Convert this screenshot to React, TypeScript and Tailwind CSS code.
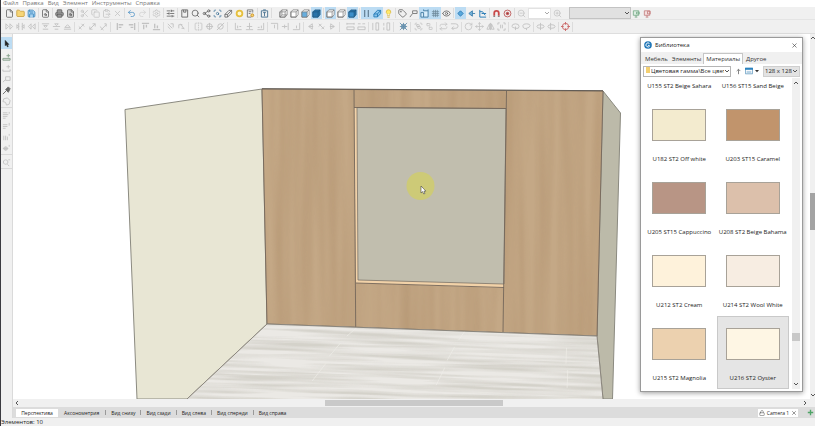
import React from "react";
import {
  ClipboardPaste, Copy, Eye, File, Folder, Lightbulb, Lock, Printer,
  Redo2, Save, Scissors, Search, Settings, Share2, SlidersHorizontal, Tag, Undo2, X, ZoomIn, ZoomOut,
  FileSearch, FlipHorizontal, Move, RotateCw, Repeat, Group, Ungroup, ScanSearch,
} from "lucide-react";
import type { LucideIcon } from "lucide-react";

type Tool = { label: string; icon: React.ReactNode; active?: boolean };
type Swatch = { name: string; color: string; selected?: boolean };

const DARK = "#5a5a5a";
const PALE = "#c2c2c2";
const BLUE = "#2f7fb8";

const lu = (I: LucideIcon, color = DARK, fill = "none") => (
  <I size={9} strokeWidth={2} color={color} fill={fill} aria-hidden />
);

// Small drawing on a 10 x 10 grid.
const Glyph = ({ d, color = PALE, fill = "none", w = 1 }: { d: string; color?: string; fill?: string; w?: number }) => (
  <svg viewBox="0 0 10 10" className="size-[9px]" fill={fill} stroke={color} strokeWidth={w} aria-hidden>
    <path d={d} />
  </svg>
);

const Cube = ({ front = "none", wire = false, solid = false }: { front?: string; wire?: boolean; solid?: boolean }) => (
  <svg viewBox="0 0 10 10" className="size-[9px]" stroke={solid ? "#1e567f" : "#777"} strokeWidth=".8" strokeLinejoin="round" aria-hidden>
    <path d="M1 3.2 3.2 1H9v5.3L6.8 9H1Z" fill={solid ? "#2a74aa" : "#fff"} />
    <path d="M1 3.2h5.8V9H1Z" fill={front} />
    <path d="M6.8 3.2 9 1" />
    {wire && <path d="M3.2 1v5.6H9M3.2 6.6 1 9" fill="none" />}
  </svg>
);

const t = (label: string, icon: React.ReactNode, active = false): Tool => ({ label, icon, active });
const g = (label: string, d: string, color = PALE, fill = "none", w = 1) => t(label, <Glyph d={d} color={color} fill={fill} w={w} />);

const mainTools: Tool[][] = [
  [t("Создать", lu(File)), t("Открыть", lu(Folder, "#c79a35", "#f6d577")), t("Сохранить", lu(Save, BLUE, "#a9d3f0"))],
  [t("Просмотр", lu(FileSearch))],
  [t("Печать", lu(Printer, DARK, "#999")), t("Настройка печати", lu(FileSearch, DARK, "#ccc"))],
  [t("Вырезать", lu(Scissors, PALE)), t("Копировать", lu(Copy, PALE)), t("Вставить", lu(ClipboardPaste, PALE)), t("Удалить", lu(X, PALE))],
  [t("Отменить", lu(Undo2, "#4a8fc4")), t("Повторить", lu(Redo2, "#d0d0d0"))],
  [t("Параметры", lu(Settings, PALE))],
  [t("Свойства", lu(SlidersHorizontal))],
  [
    g("Закладка", "M2 1h6.5v8H2ZM4 1v2.500h2.500V1", "#666"),
    t("Найти", lu(Search)), t("Структура", lu(Share2)),
    t("Проверка", lu(ScanSearch, "#41749a")), g("Связь", "M1 6 5.500 1.500H8.500V4.500L4 9H1ZM1 6h3v3M4 6l4.500-4.500", "#666", "none", .9),
    g("Кольцо", "M5 1.8a3.2 3.2 0 1 0 0 6.4 3.2 3.2 0 1 0 0-6.4", "#e6bf3d", "#fff8d0", 2),
    t("Отчёт", <svg viewBox="0 0 10 10" className="size-[9px]" fill="none" stroke="#777" aria-hidden><path d="M6 9H1.500V1H7.500v3M3 3h3M3 5h2" /><circle cx="7" cy="7" r="1.600" fill="#f7d66c" stroke="#c98f2b" /></svg>),
  ],
  [g("Текст", "M1.500 2h7v7h-7ZM3.500 1h3M3.500 4h3M5 4v4", "#456f8e")],
];
const viewTools: Tool[][] = [
  [t("Каркас", <Cube wire />), t("Контур", <Cube />), t("Полутон", <Cube front="#67aede" />), t("Заливка", <Cube solid front="#2a74aa" />, true)],
  [t("Рёбра", <Cube />, true), t("Без рёбер", <Cube />), t("Текстуры", <Cube solid front="#3c8fca" />, true)],
  [
    { ...g("Стойки", "M3 1v8M7 1v8", "#5f7c90", "none", 1.3), active: true },
    { ...g("Прозрачность", "M1 5.5 5 1.5h3.5V5L5 8.8H1ZM1 5.5h4v3.3M5 5.5 8.5 1.5", "#257bb7", "#8bc4ea"), active: true },
    t("Свет", lu(Lightbulb, "#d8b534", "#ffe96a")),
  ],
  [
    t("Метка", lu(Tag)), g("Выноска", "M1 9 4 5M4 2h5v3H4Z", "#777"),
    { ...g("Размеры", "M1 4h3v5H1ZM4 2h5v7H4M4 2V.5M9 2V.5", "#3e789f", "#d8edfb"), active: true },
    { ...g("Сетка", "M1 3h8M1 5h8M1 7h8M3 1v8M5 1v8M7 1v8", "#6a8596", "none", .8), active: true },
    t("Показать", lu(Eye)),
  ],
  [
    { ...g("Привязка", "M5 2 8 5 5 8 2 5Z", "#2c7bb4", "#58a8dc"), active: true },
    g("Точка", "M6 2v6L2 5ZM6 5h3", "#3e7fab", "#74b5dd"), g("Оси", "M2 1v8h7M2 3h3l3 4M4 5h5", BLUE, "none", 1.1),
  ],
  [
    t("Магнит", <svg viewBox="0 0 10 10" className="size-[9px]" fill="none" strokeWidth="2" aria-hidden><path d="M2.500 7.500V4.500a2.500 2.500 0 0 1 5 0v3" stroke="#c94848" /><path d="M2.500 7.500v1.500M7.500 7.500v1.500" stroke="#888" /></svg>),
    t("Цель", <svg viewBox="0 0 10 10" className="size-[9px]" fill="none" stroke="#bd5a5a" aria-hidden><circle cx="5" cy="5" r="3.800" /><circle cx="5" cy="5" r="1.400" fill="#a33" /></svg>),
  ],
];

const L = (dir: number) => (dir === 0 ? "M1 2v6L4 5ZM5.500 2v6L8.500 5Z" : dir === 1 ? "M3 1v8M7 1v8M1 3v4L3 5ZM9 3v4L7 5Z" : "M9 2v6L6 5ZM4.500 2v6L1.500 5Z");
const alignTools: { gap: string; groups: Tool[][] }[] = [
  { gap: "", groups: [
    [0, 1, 2].map((i) => g(`Сдвиг по X ${i + 1}`, L(i))),
    [g("Сдвиг вверх", "M1 2h8M3 4h4L5 6ZM2 8h6"), g("Сдвиг по центру", "M1 5h8M3 2h4L5 4ZM3 8h4"), g("Сдвиг вниз", "M1 8h8M2 6h6L5 3Z")],
    [g("Глубина 1", "M2 8 8 2M2 5l3 3M5 2l3 3"), g("Глубина 2", "M2 8l6-6M5 2h3v3M2 5v3h3"), g("Глубина 3", "M2 9l6-6M1 5l4 4M6 2h2v3")],
  ] },
  { gap: "ml-[3px]", groups: [
    [g("По левому краю", "M1.5 1v8M3 3h5M3 6h3", PALE, "none", 1.5), g("По правому краю", "M8.5 1v8M2 3h5M4 6h3", PALE, "none", 1.5)],
    [g("По верху", "M1 1.5h8M3 3v5M6 3v3", PALE, "none", 1.5), g("По низу", "M1 8.5h8M3 2v5M6 4v3", PALE, "none", 1.5)],
    [g("Вперёд", "M2 2l5 5M2 5l3 3M5 2h3v4"), g("Назад", "M2 7V3h4M4 2l4 6M5 7h3")],
  ] },
  { gap: "ml-[3px]", groups: [
    [t("Отразить", lu(FlipHorizontal, PALE)), g("Центр", "M5 1v8M1 5h8M5 2a3 3 0 1 0 0 6 3 3 0 1 0 0-6"), g("Отменить выбор", "M5 2a3 3 0 1 0 0 6 3 3 0 1 0 0-6M1 9 9 1")],
  ] },
  { gap: "ml-[4px]", groups: [
    [g("Край 1", "M1.5 1v7.500h7M4 4v3M6 5h2"), g("Край 2", "M5 1v7M1 8.5h8M2 5h6"), g("Край 3", "M8.5 1v7.500h-7M6 4v3M2 6h2")],
    [g("Верх 1", "M1 1.5h7.5v7M5 3v4"), g("Верх 2", "M8 1v8M1 5h6M4 3v4"), g("Верх 3", "M1 8.5h7.5V1M5 4v3")],
    [g("Угол 1", "M3 5l4-3v6ZM3 5h5"), g("Угол 2", "M2 2l6 6M2 5l3-3M5 8l3-3"), g("Угол 3", "M7 5 3 2v6ZM2 5h5")],
  ] },
  { gap: "ml-[4px]", groups: [
    [g("Ширина 1", "M1 2h8M1 1v2M9 1v2M1 5.500h8v3H1Z"), g("Ширина 2", "M1 2h3M6 2h3M1 5.500h8v3H1Z")],
    [g("Высота 1", "M2 1v8M5.500 1h3v8h-3Z"), g("Высота 2", "M2 1v3M2 6v3M5.500 1h3v8h-3Z")],
  ] },
  { gap: "ml-[3px]", groups: [
    [g("Узлы", "M3 3h4v4H3ZM1 5h8M5 1v8M1 1l8 8M9 1 1 9", "#5f8ba8", "#b6d8ee", .9)],
  ] },
  { gap: "ml-px", groups: [
    [t("Группа", lu(Group, PALE)), t("Разгруппировать", lu(Ungroup, PALE))],
    [t("Шаг назад", lu(Repeat, PALE)), g("Шаг вперёд", "M1 2h5q3 0 3 2.5T6 7H2M4 5 2 7l2 2")],
    [t("Повернуть", lu(RotateCw, PALE)), t("Переместить", lu(Move, PALE)), g("Зеркало", "M4 2v6H1ZM6 2v6h3ZM5 1v8"), g("Масштаб", "M1 3V1h2M7 1h2v2M9 7v2H7M3 9H1V7M4 3v4M6 3v4")],
    [g("Соединить", "M1 5q0-3 4-3t4 3-4 2-4-2M5 5v4"), g("Разъединить", "M1 4q0-2 4-2t4 2-4 3-4-3M5 7v2")],
    [g("Сечение", "M1 5q0-2 4-2t4 2-4 2-4-2M5 1v8"), g("Разрез", "M1 5q0-2 4-2t4 2-4 2-4-2M4 1v8")],
    [g("Прицел", "M5 1.5a3.5 3.5 0 1 0 0 7 3.5 3.5 0 1 0 0-7M5 0v3M5 7v3M0 5h3M7 5h3", "#c96464")],
  ] },
];

const sideTools: Tool[][] = [
  [g("Добавить деталь", "M1 6h8v2H1ZM7 1v4M5 3h4", "#86a08b", "#ddd"), g("Добавить профиль", "M1 6v2h8V6M7 1v4M5 3h4"), g("Линия", "M1 8 4 5M4 2h5v4H4Z"), g("Пипетка", "M1 9 5 5M4 4l3 3 2-4-2-2Z", "#666", "#666", 1), g("Область", "M2 2l4-1 3 3-1 4-3 1-1-3-3-1Z")],
  [g("Список", "M1 2h5M1 4h6M1 6h5M1 8h3M8 1v2"), g("Слои", "M1 3h5M1 5h5M1 7h3M8 1v3"), g("Колонки", "M2 3v5M4 3v5M6 4v4M8 1v2"), g("Узел", "M4 3a2 2 0 1 0 .1 0M1 5h6M8 1v2", PALE, "#ccc")],
  [g("Поиск", "M4 2a2.5 2.5 0 1 0 .1 0M6 7l2 2M7 2h2")],
];

const swatchRows: Swatch[] = [
  { name: "U182 ST2 Off white", color: "bg-[#f3ebcf]" },
  { name: "U203 ST15 Caramel", color: "bg-[#c1946c]" },
  { name: "U205 ST15 Cappuccino", color: "bg-[#b89585]" },
  { name: "U208 ST2 Beige Bahama", color: "bg-[#dcc0ab]" },
  { name: "U212 ST2 Cream", color: "bg-[#fef2db]" },
  { name: "U214 ST2 Wool White", color: "bg-[#f7ede2]" },
  { name: "U215 ST2 Magnolia", color: "bg-[#ecd1af]" },
  { name: "U216 ST2 Oyster", color: "bg-[#fef6e4]", selected: true },
];

const ToolButton = ({ tool, vertical = false }: { tool: Tool; vertical?: boolean }) => (
  <button type="button" aria-label={tool.label} aria-pressed={tool.active}
    className={`flex w-[11px] shrink-0 items-center justify-center ${vertical ? "h-[11px]" : "h-[12px]"} ${tool.active ? "bg-[#bcdcf3]" : ""}`}>
    {tool.icon}
  </button>
);

const ToolGroups = ({ groups }: { groups: Tool[][] }) => (
  <>
    {groups.map((tools, i) => (
      <div key={i} className="flex shrink-0 items-center">
        {tools.map((tool) => <ToolButton key={tool.label} tool={tool} />)}
        <span className="mx-px h-[10px] w-px bg-[#dcdcdc]" />
      </div>
    ))}
  </>
);

const Chevron = ({ dir, className = "" }: { dir: "up" | "down" | "left" | "right"; className?: string }) => {
  const paths = { up: "M1 4 3 2 5 4", down: "M1 2 3 4 5 2", left: "M4 1 2 3 4 5", right: "M2 1 4 3 2 5" };
  return (
    <svg viewBox="0 0 6 6" className={`size-[6px] shrink-0 ${className}`} fill="none" stroke="#555" aria-hidden>
      <path d={paths[dir]} />
    </svg>
  );
};

const Scene = () => (
  <svg viewBox="13 34 797 365" preserveAspectRatio="xMidYMid slice" className="size-full" role="img" aria-label="Трёхмерная модель">
    <defs>
      <filter id="grain" x="0" y="0" width="100%" height="100%" colorInterpolationFilters="sRGB">
        <feTurbulence type="fractalNoise" baseFrequency="0.08 0.004" numOctaves="2" seed="8" />
        <feColorMatrix values="0 0 0 0 .65  0 0 0 0 .52  0 0 0 0 .38  1.6 0 0 0 -.5" />
      </filter>
      <filter id="planks" x="0" y="0" width="100%" height="100%" colorInterpolationFilters="sRGB">
        <feTurbulence type="fractalNoise" baseFrequency="0.009 0.3" numOctaves="2" seed="4" />
        <feColorMatrix values="0 0 0 0 .76  0 0 0 0 .75  0 0 0 0 .71  2.6 0 0 0 -.9" />
      </filter>
      <clipPath id="cabinet"><path d="M262 89 603 91 597 336 267 324Z" /></clipPath>
      <clipPath id="floor"><path d="M267 324 597 336 603 399 187 399Z" /></clipPath>
    </defs>
    <path d="M125 109.500 262 89 267 324 187 399H137Z" fill="#e8e6d4" stroke="#8b8a80" />
    <path d="M603 91 620.500 113 612.500 399H603L597 336Z" fill="#bcbaa9" stroke="#8b8a80" />
    <path d="M262 89 603 91 597 336 267 324Z" fill="#c4a886" />
    <g clipPath="url(#cabinet)"><rect x="260" y="85" width="346" height="255" filter="url(#grain)" opacity=".4" /></g>
    <path d="M354 107.500 506 108.500 504 288 356 283Z" fill="#f2d2a8" />
    <path d="M357 107.500 506 108.500 504 284 358 280Z" fill="#c1beae" stroke="#7d756a" strokeWidth=".8" />
    <g fill="none" stroke="#74675a" strokeWidth=".9">
      <path d="M262 89 603 91 597 336 267 324Z" />
      <path d="M354 90 355.700 327M506.500 91 503 332.500M354 107.500 506 108.500M356 283 504 287.500" />
    </g>
    <path d="M262 88.700 603 90.700" stroke="#625c55" />
    <g clipPath="url(#floor)">
      <rect x="180" y="320" width="430" height="80" fill="#ebe9e5" />
      <g transform="rotate(2 400 360)">
        <rect x="170" y="300" width="450" height="120" filter="url(#planks)" opacity=".55" />
        <path d="M357 328l-11 10M465 327l-7 11M340 345l-11 14M454 345l-7 14M566 342v16M326 366l-13 18M445 366l-8 18M568 364v18" stroke="#f0efea" strokeWidth=".6" />
      </g>
    </g>
    <path d="M187 399 267 324 597 336 603 399" fill="none" stroke="#8b867d" />
    <circle cx="420.500" cy="186" r="14" fill="#cdca77" />
    <path d="M421 186v7l1.600-1.400 1.200 2.400 1.200-.6-1.100-2.300h2Z" fill="#fff" stroke="#444" strokeWidth=".6" />
  </svg>
);

const Library = () => (
  <section aria-label="Библиотека" className="absolute top-[3px] right-[12px] flex w-[163px] flex-col border border-[#9a9a9a] bg-white shadow-[0_1px_5px_rgba(0,0,0,0.4)]">
    <header className="flex h-[14px] items-center gap-[3px] pr-1 pl-[3px]">
      <svg viewBox="0 0 10 10" className="size-[8px]" aria-hidden>
        <circle cx="5" cy="5" r="4.800" fill="#2278b8" />
        <path d="M6.800 3.200a2.500 2.500 0 1 0 .3 3L5 5.200" fill="none" stroke="#fff" strokeWidth="1.200" />
      </svg>
      <h2 className="flex-1">Библиотека</h2>
      <button type="button" aria-label="Закрыть"><X size={7} color="#333" /></button>
    </header>
    <div className="flex flex-col bg-[#f0f0f0] px-[2px]">
      <div role="tablist" className="flex h-[12px] items-end text-[#333]">
        <button role="tab" type="button" className="h-[10px] px-[2px]">Мебель</button>
        <button role="tab" type="button" className="h-[10px] px-[2px]">Элементы</button>
        <button role="tab" type="button" aria-selected className="h-[11px] border border-b-0 border-[#c6c6c6] bg-white px-[2px]">Материалы</button>
        <button role="tab" type="button" className="h-[10px] px-[3px]">Другое</button>
      </div>
      <div className="-mx-[2px] flex h-[14px] items-center bg-white px-[2px]">
        <label className="flex h-[11px] w-[88px] items-center border border-[#b5b5b5]">
          <svg viewBox="0 0 6 8" className="ml-px h-[8px] w-[6px] shrink-0" aria-hidden><path d="M1 0h4v6H1Z" fill="#f3cf70" /></svg>
          <select aria-label="Раздел" className="min-w-0 flex-1 appearance-none text-[#222]"><option>Цветовая гамма\Все цвет</option></select>
          <Chevron dir="down" />
        </label>
        <button type="button" aria-label="На уровень вверх" className="ml-[3px]"><Glyph d="M5 8V2.500M3 4.500 5 2.500l2 2" color="#777" /></button>
        <button type="button" aria-label="Вид" className="ml-[2px] flex items-center">
          <svg viewBox="0 0 10 10" className="size-[8px]" aria-hidden>
            <path d="M.5 1.500h9v7h-9Z" fill="#fff" stroke="#5f98bf" /><path d="M0 1h10v2.500H0Z" fill="#2b83bf" /><path d="M2 5.500h6M2 7h6" stroke="#9ac0da" />
          </svg>
          <svg viewBox="0 0 6 6" className="ml-[2px] size-[4px]" aria-hidden><path d="M0 1.500h6L3 5Z" fill="#333" /></svg>
        </button>
        <label className="ml-auto flex h-[11px] w-[37px] items-center border border-[#cfcfcf] bg-[#e3e3e3]">
          <select aria-label="Размер образцов" className="w-[28px] appearance-none pl-px text-[#222]"><option>128 x 128</option></select>
          <Chevron dir="down" />
        </label>
      </div>
    </div>
    <div className="flex px-[2px] pb-[2px]">
      <div className="grid flex-1 grid-cols-2 gap-x-px text-center">
        <p className="h-[19px] pt-[4px] whitespace-nowrap">U155 ST2 Beige Sahara</p>
        <p className="h-[19px] pt-[4px] whitespace-nowrap">U156 ST15 Sand Beige</p>
        {swatchRows.map((s) => (
          <button key={s.name} type="button" aria-pressed={!!s.selected}
            className={`flex h-[73px] flex-col items-center border pt-[11px] whitespace-nowrap ${s.selected ? "border-[#c9c9c9] bg-[#e5e5e5]" : "border-transparent"}`}>
            <span className={`h-[32px] w-[54px] border border-[#a8a298] ${s.color}`} />
            <span className="mt-[14px]">{s.name}</span>
          </button>
        ))}
      </div>
      <div className="ml-[3px] flex w-[8px] flex-col items-center bg-[#f0f0f0] py-[2px]">
        <Chevron dir="up" />
        <span className="mt-auto h-[8px] w-full bg-[#c8c8c8]" />
        <Chevron dir="down" className="mt-[40px]" />
      </div>
    </div>
  </section>
);

export default function App() {
  return (
    <div className="flex h-screen flex-col overflow-hidden border-l border-[#3b3b40] bg-[#f0f0f0] font-['Open_Sans','Noto_Sans',sans-serif] text-[6px] leading-[8px] text-[#222]">
      <nav className="flex h-[7px] shrink-0 items-start gap-[4px] bg-white pl-[2px] leading-[7px] text-[#777]">
        {["Файл", "Правка", "Вид", "Элемент", "Инструменты", "Справка"].map((m) => <button key={m} type="button" className="h-[7px] shrink-0">{m}</button>)}
      </nav>

      <div className="flex h-[13px] shrink-0 items-center border-b border-[#e4e4e4] pl-[3px]">
        <ToolGroups groups={mainTools} />
        <span className="w-[5px] shrink-0" />
        <ToolGroups groups={viewTools} />
        <ToolButton tool={t("Уменьшить", lu(ZoomOut, PALE))} />
        <label className="mx-px flex h-[11px] w-[23px] shrink-0 items-center justify-end border border-[#e2e2e2] bg-white">
          <select aria-label="Масштаб" className="w-[14px] appearance-none" />
          <Chevron dir="down" className="opacity-50" />
        </label>
        <ToolButton tool={t("Увеличить", lu(ZoomIn, PALE))} />
        <label className="ml-[6px] flex h-[12px] w-[62px] shrink-0 items-center border border-[#c3c3c3] bg-[#e1e1e1]">
          <select aria-label="Слой" className="min-w-0 flex-1 appearance-none" />
          <Chevron dir="down" />
        </label>
        <ToolButton tool={g("Включить экран", "M1.500 2h6v5h-6ZM3 9h3M4.500 7v2M5 3.500h3v2H5Z", "#74a886", "#dceee2", .9)} />
        <ToolButton tool={g("Выключить экран", "M1.500 2h6v5h-6ZM3 9h3M4.500 7v2M5 2.500h3v3H5Z", "#c47c7c", "#f3dede", .9)} />
      </div>

      <div className="flex h-[14px] shrink-0 items-center border-b border-[#dedede] pl-[3px]">
        {alignTools.map((bar, i) => <div key={i} className={`flex shrink-0 ${bar.gap}`}><ToolGroups groups={bar.groups} /></div>)}
      </div>

      <div className="flex min-h-0 flex-1">
        <aside className="flex w-[12px] shrink-0 flex-col items-center border-r border-[#dadada] pt-[3px]">
          <button type="button" aria-label="Выбор" aria-pressed className="mb-[3px] flex h-[12px] w-[11px] shrink-0 items-center justify-center bg-[#bcdcf3]">
            <Glyph d="M3.500 1.500v6l1.300-1.200L6 8.800l1-.5-1-2.300h1.800Z" color="#222" fill="#222" w={.5} />
          </button>
          {sideTools.map((tools, i) => (
            <div key={i} className="mb-[2px] flex flex-col border-b border-[#d9d9d9]">
              {tools.map((tool) => <ToolButton key={tool.label} tool={tool} vertical />)}
            </div>
          ))}
        </aside>

        <div className="flex min-w-0 flex-1 flex-col">
          <main className="relative flex min-h-0 flex-1 bg-white">
            <div className="min-w-0 flex-1 overflow-hidden"><Scene /></div>
            <div className="flex w-[5px] shrink-0 flex-col items-center bg-[#f0f0f0] py-px">
              <Chevron dir="up" />
              <div className="flex w-full flex-1 flex-col">
                <span className="grow-[152]" />
                <span className="h-[37px] w-full bg-[#a3a3a3]" />
                <span className="grow-[162]" />
              </div>
              <Chevron dir="down" />
            </div>
            <Library />
          </main>
          <div className="flex h-[8px] shrink-0 items-center pr-[7px] pl-px">
            <Chevron dir="left" />
            <div className="flex h-[6px] flex-1">
              <span className="grow-[305]" />
              <span className="w-[178px] bg-[#c9c9c9]" />
              <span className="grow-[299]" />
            </div>
            <Chevron dir="right" />
          </div>
          <div className="flex h-[11px] shrink-0 items-center bg-[#dcdcdc] pl-[3px] text-[5px]">
            <button type="button" className="h-[8px] w-[42px] bg-white">Перспектива</button>
            {["Аксонометрия", "Вид снизу", "Вид сзади", "Вид слева", "Вид спереди", "Вид справа"].map((v, i) => (
              <div key={v} className="flex items-center">
                {i > 0 && <span className="h-[5px] w-px bg-[#999]" />}
                <button type="button" className={i === 0 ? "px-[6px]" : "px-[5px]"}>{v}</button>
              </div>
            ))}
            <button type="button" className="ml-auto flex h-[8px] w-[40px] items-center justify-center gap-[2px] bg-white">
              <Lock size={6} color="#555" />Camera 1<X size={6} color="#333" />
            </button>
            <button type="button" aria-label="Добавить камеру" className="ml-[8px] w-[9px]"><Glyph d="M5 2v6M2 5h6" color="#4fa467" w={1.5} /></button>
          </div>
        </div>
      </div>
      <footer className="h-[8px] shrink-0">Элементов: 10</footer>
    </div>
  );
}
